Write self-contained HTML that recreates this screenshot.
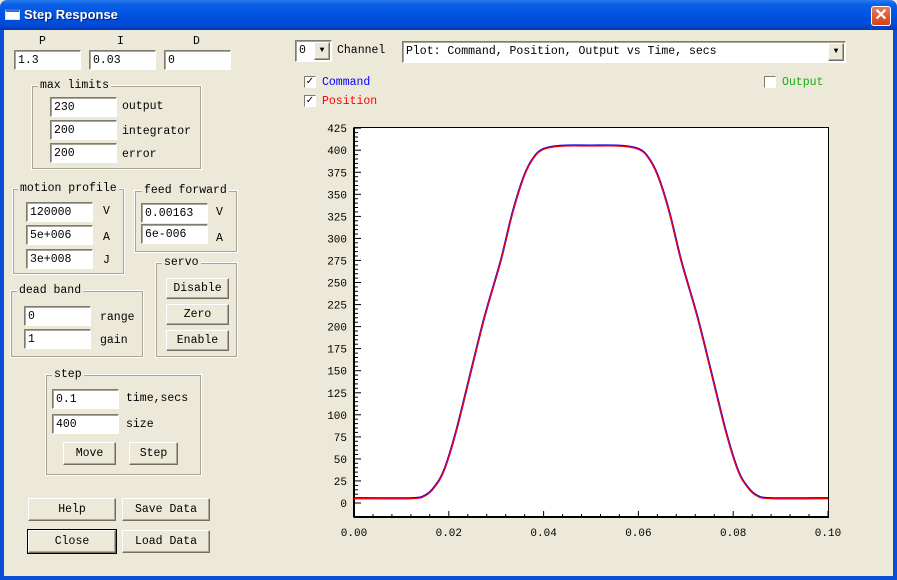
<!DOCTYPE html>
<html><head><meta charset="utf-8"><style>
*{margin:0;padding:0;box-sizing:border-box}
body{width:897px;height:580px;overflow:hidden;background:#ECE9D8;position:relative;font-family:"Liberation Mono",monospace;font-size:11.5px;color:#000}
.tb{position:absolute;left:0;top:0;width:897px;height:30px;background:linear-gradient(#2a7bf0 0%,#0a5fe6 15%,#0054e3 50%,#0049d4 85%,#0039b0 100%);border-radius:7px 7px 0 0}
.tt{position:absolute;left:24px;top:7px;color:#fff;font:bold 13px "Liberation Sans",sans-serif;text-shadow:1px 1px #0a1f6a}
.ic{position:absolute;left:5px;top:9px;width:15px;height:11px;background:#fff;border:1px solid #dde;border-top:3px solid #3b6fd8}
.cb{position:absolute;left:871px;top:6px;width:20px;height:20px;border:1px solid #fff;border-radius:3px;background:linear-gradient(#e8785a,#d2421c);color:#fff;font:bold 16px "Liberation Sans",sans-serif;text-align:center;line-height:18px}
.bl{position:absolute;background:#0a4fd6}
.a{position:absolute;white-space:pre}
.in{position:absolute;background:#fff;border:1px solid;border-color:#7f7c6f #fff #fff #7f7c6f;box-shadow:inset 1px 1px #a8a596;padding:3px 0 0 3px;height:20px}
.gb{position:absolute;border:1px solid #fff;outline:1px solid #a8a596;outline-offset:-2px}
.gl{position:absolute;background:#ECE9D8;padding:0 2px;white-space:pre}
.bt{position:absolute;background:#ECE9D8;border:1px solid;border-color:#fff #716f64 #716f64 #fff;box-shadow:inset -1px -1px #aca899;text-align:center;line-height:20px}
.ck{position:absolute;width:12px;height:12px;background:#fff;border:1px solid;border-color:#7f7c6f #fff #fff #7f7c6f;font:bold 10px "DejaVu Sans",sans-serif;line-height:10px;text-align:center}
</style></head><body>
<div class="tb"><div class="ic"></div><div class="tt">Step Response</div><div class="cb">✕</div></div>
<div class="bl" style="left:0;top:30px;width:4px;height:550px"></div>
<div class="bl" style="left:893px;top:30px;width:4px;height:550px"></div>
<div class="bl" style="left:0;top:576px;width:897px;height:4px"></div>

<div class="a" style="left:39px;top:35px">P</div>
<div class="a" style="left:117px;top:35px">I</div>
<div class="a" style="left:193px;top:35px">D</div>
<div class="in" style="left:14px;top:50px;width:67px">1.3</div>
<div class="in" style="left:89px;top:50px;width:67px">0.03</div>
<div class="in" style="left:164px;top:50px;width:67px">0</div>

<div class="gb" style="left:31px;top:85px;width:171px;height:85px"></div>
<div class="gl" style="left:38px;top:79px">max limits</div>
<div class="in" style="left:50px;top:97px;width:67px">230</div>
<div class="in" style="left:50px;top:120px;width:67px">200</div>
<div class="in" style="left:50px;top:143px;width:67px">200</div>
<div class="a" style="left:122px;top:100px">output</div>
<div class="a" style="left:122px;top:125px">integrator</div>
<div class="a" style="left:122px;top:148px">error</div>

<div class="gb" style="left:12px;top:188px;width:113px;height:87px"></div>
<div class="gl" style="left:18px;top:182px">motion profile</div>
<div class="in" style="left:26px;top:202px;width:67px">120000</div>
<div class="in" style="left:26px;top:225px;width:67px">5e+006</div>
<div class="in" style="left:26px;top:249px;width:67px">3e+008</div>
<div class="a" style="left:103px;top:205px">V</div>
<div class="a" style="left:103px;top:231px">A</div>
<div class="a" style="left:103px;top:254px">J</div>

<div class="gb" style="left:134px;top:190px;width:104px;height:63px"></div>
<div class="gl" style="left:142px;top:184px">feed forward</div>
<div class="in" style="left:141px;top:203px;width:67px">0.00163</div>
<div class="in" style="left:141px;top:224px;width:67px">6e-006</div>
<div class="a" style="left:216px;top:206px">V</div>
<div class="a" style="left:216px;top:232px">A</div>

<div class="gb" style="left:155px;top:262px;width:83px;height:96px"></div>
<div class="gl" style="left:162px;top:256px">servo</div>
<div class="bt" style="left:166px;top:278px;width:63px;height:21px">Disable</div>
<div class="bt" style="left:166px;top:304px;width:63px;height:21px">Zero</div>
<div class="bt" style="left:166px;top:330px;width:63px;height:21px">Enable</div>

<div class="gb" style="left:10px;top:290px;width:134px;height:68px"></div>
<div class="gl" style="left:17px;top:284px">dead band</div>
<div class="in" style="left:24px;top:306px;width:67px">0</div>
<div class="in" style="left:24px;top:329px;width:67px">1</div>
<div class="a" style="left:100px;top:311px">range</div>
<div class="a" style="left:100px;top:334px">gain</div>

<div class="gb" style="left:45px;top:374px;width:157px;height:102px"></div>
<div class="gl" style="left:52px;top:368px">step</div>
<div class="in" style="left:52px;top:389px;width:67px">0.1</div>
<div class="in" style="left:52px;top:414px;width:67px">400</div>
<div class="a" style="left:126px;top:392px">time,secs</div>
<div class="a" style="left:126px;top:418px">size</div>
<div class="bt" style="left:63px;top:442px;width:53px;height:23px;line-height:21px">Move</div>
<div class="bt" style="left:129px;top:442px;width:49px;height:23px;line-height:21px">Step</div>

<div class="bt" style="left:28px;top:498px;width:88px;height:23px;line-height:21px">Help</div>
<div class="bt" style="left:122px;top:498px;width:88px;height:23px;line-height:21px">Save Data</div>
<div class="bt" style="left:28px;top:530px;width:88px;height:23px;line-height:21px;outline:1px solid #000">Close</div>
<div class="bt" style="left:122px;top:530px;width:88px;height:23px;line-height:21px">Load Data</div>

<div class="in" style="left:295px;top:40px;width:37px;height:22px;padding-top:3px">0</div>
<div class="bt" style="left:314px;top:42px;width:16px;height:18px;line-height:16px;font-size:8px">▼</div>
<div class="a" style="left:337px;top:44px">Channel</div>
<div class="in" style="left:402px;top:41px;width:444px;height:22px">Plot: Command, Position, Output vs Time, secs</div>
<div class="bt" style="left:828px;top:43px;width:16px;height:18px;line-height:16px;font-size:8px">▼</div>

<div class="ck" style="left:304px;top:76px">✓</div>
<div class="a" style="left:322px;top:76px;color:#0000ff">Command</div>
<div class="ck" style="left:304px;top:95px">✓</div>
<div class="a" style="left:322px;top:95px;color:#ff0000">Position</div>
<div class="ck" style="left:764px;top:76px"></div>
<div class="a" style="left:782px;top:76px;color:#10b010">Output</div>

<svg id="plt" style="position:absolute;left:0;top:0" width="897" height="580" font-family="Liberation Mono, monospace" font-size="11">
<rect x="354.5" y="127.5" width="474" height="390" fill="#fff" stroke="#000" stroke-width="1"/>
<line x1="354" y1="127.5" x2="354" y2="517.5" stroke="#000" stroke-width="2"/>
<line x1="354" y1="517" x2="829" y2="517" stroke="#000" stroke-width="2"/>
<g id="tk" stroke="#000" stroke-width="1"></g>
<g id="lb"></g>
<path id="c1" fill="none" stroke="#0000ff" stroke-width="2"/>
<path id="c2" fill="none" stroke="#ff0000" stroke-width="1.3"/>
</svg>
<script>
var tk=document.getElementById('tk'),lb=document.getElementById('lb'),s='',l='';
for(var v=0;v<=425;v+=5){var y=503-v*0.882;var m=v%25==0;s+='<line x1="354" x2="'+(m?361:358)+'" y1="'+y.toFixed(1)+'" y2="'+y.toFixed(1)+'"/>';if(m)l+='<text x="347" y="'+(y+4).toFixed(1)+'" text-anchor="end">'+v+'</text>';}
for(var i=0;i<=25;i++){var x=354+i*18.96;var m=i%5==0;s+='<line x1="'+x.toFixed(1)+'" x2="'+x.toFixed(1)+'" y1="517" y2="'+(m?511:514)+'"/>';if(m)l+='<text x="'+x.toFixed(1)+'" y="536" text-anchor="middle">'+(i*0.004).toFixed(2)+'</text>';}
tk.innerHTML=s;lb.innerHTML=l;
var P=[[354,498.6],[411,498.6],[425,495.9],[434.6,487.1],[444.1,470.4],[455.9,432.4],[470.1,375.1],[484.4,317.8],[500.9,260.5],[512.8,211.9],[524.6,174.9],[534.1,157.3],[543.6,149.3],[560.2,146.2],[590,146],[621.8,146.2],[638.4,149.3],[647.9,157.3],[657.4,174.9],[669.2,211.9],[681.1,260.5],[697.6,317.8],[711.9,375.1],[726.1,432.4],[737.9,470.4],[747.4,487.1],[756.9,495.9],[771.1,498.6],[828,498.6]];
function cr(p,dy){var d='M'+p[0][0]+','+(p[0][1]+dy);for(var i=0;i<p.length-1;i++){var a=p[Math.max(0,i-1)],b=p[i],c=p[i+1],e=p[Math.min(p.length-1,i+2)];d+=' C'+(b[0]+(c[0]-a[0])/6).toFixed(1)+','+(b[1]+(c[1]-a[1])/6+dy).toFixed(1)+' '+(c[0]-(e[0]-b[0])/6).toFixed(1)+','+(c[1]-(e[1]-b[1])/6+dy).toFixed(1)+' '+c[0]+','+(c[1]+dy);}return d;}
document.getElementById('c1').setAttribute('d',cr(P,-0.5));
document.getElementById('c2').setAttribute('d',cr(P,0));
</script>
</body></html>
